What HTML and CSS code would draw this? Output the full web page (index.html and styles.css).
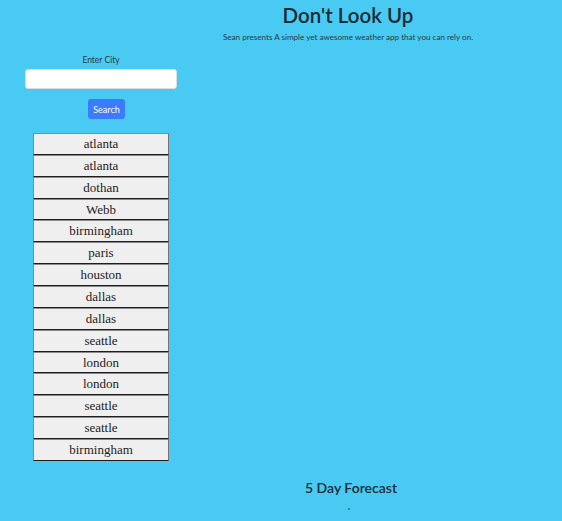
FILE: index.html
```html
<!DOCTYPE html>
<html>
<head>
<meta charset="utf-8">
<link rel="stylesheet" href="styles.css">
</head>
<body>
<div class="page">
  <aside class="sidebar">
    <label class="label" for="city">Enter City</label>
    <input id="city" class="city-input" type="text">
    <button class="search-btn">Search</button>
    <div class="history">
      <button class="city">atlanta</button>
      <button class="city">atlanta</button>
      <button class="city">dothan</button>
      <button class="city">Webb</button>
      <button class="city">birmingham</button>
      <button class="city">paris</button>
      <button class="city">houston</button>
      <button class="city">dallas</button>
      <button class="city">dallas</button>
      <button class="city">seattle</button>
      <button class="city">london</button>
      <button class="city">london</button>
      <button class="city">seattle</button>
      <button class="city">seattle</button>
      <button class="city">birmingham</button>
    </div>
  </aside>
  <main class="main">
    <header class="header">
      <h1 class="title">Don't Look Up</h1>
      <p class="subtitle">Sean presents A simple yet awesome weather app that you can rely on.</p>
    </header>
    <section class="forecast">
      <h2 class="forecast-title">5 Day Forecast</h2>
      <div class="forecast-cards"><span class="dot"></span></div>
    </section>
  </main>
</div>
</body>
</html>
```

FILE: styles.css
```css
html, body {
  margin: 0;
  padding: 0;
}
body {
  background: #48caf2;
  color: #212529;
  font-family: "Lato", "Open Sans", sans-serif;
}
.page {
  display: flex;
  min-height: 521px;
}
.sidebar {
  width: 202px;
  flex: none;
  display: flex;
  flex-direction: column;
  align-items: center;
  padding-top: 55px;
  box-sizing: border-box;
}
.label {
  font-size: 8.5px;
  line-height: 11px;
  color: #2a3a44;
}
.city-input {
  margin-top: 3px;
  width: 152px;
  height: 20px;
  box-sizing: border-box;
  border: 1px solid #d8dde2;
  border-radius: 3px;
  background: #fff;
  padding: 0 4px;
}
.search-btn {
  margin-top: 10px;
  margin-left: 11px;
  width: 37px;
  height: 20px;
  box-sizing: border-box;
  border: none;
  border-radius: 3px;
  background: #3b7bff;
  color: #fff;
  font-family: "Lato", "Open Sans", sans-serif;
  font-size: 9px;
  padding: 0;
}
.history {
  margin-top: 14px;
  display: flex;
  flex-direction: column;
  width: 136px;
}
.city {
  display: block;
  width: 136px;
  height: 21.87px;
  box-sizing: border-box;
  background: #efefef;
  border: 1px solid #767676;
  border-top-color: #8a8a8a;
  border-left-color: #8a8a8a;
  border-bottom: 1px solid #1e1e1e;
  font-family: "Liberation Serif", "Times New Roman", serif;
  font-size: 13px;
  color: #222;
  padding: 0;
  margin: 0;
}
.main {
  flex: 1;
  display: flex;
  flex-direction: column;
  align-items: center;
  padding-right: 68px;
}
.header {
  text-align: center;
}
.title {
  margin: 0;
  font-size: 20.5px;
  font-weight: 600;
  line-height: 30px;
  color: #1f2a33;
}
.subtitle {
  margin: 1px 0 0;
  font-size: 8.1px;
  line-height: 12px;
  color: #2a3a44;
}
.forecast {
  margin-top: auto;
  padding-bottom: 1px;
  text-align: center;
  margin-left: 6px;
}
.forecast-title {
  margin: 0;
  font-size: 14px;
  font-weight: 600;
  line-height: 20px;
  color: #1f2a33;
}
.forecast-cards {
  height: 22px;
  display: flex;
  justify-content: center;
  align-items: center;
  margin-right: 4px;
}
.dot {
  width: 2px;
  height: 2px;
  background: #3a7fa0;
}
```
